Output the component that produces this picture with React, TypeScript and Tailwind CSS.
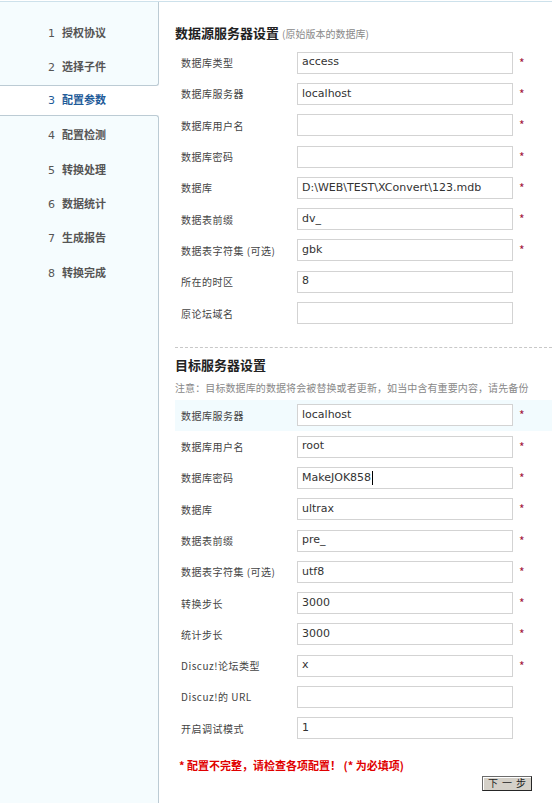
import React from 'react';

type Field = {
  label: string;
  value?: string;
  required?: boolean;
  caret?: boolean;
  hover?: boolean;
};

const steps = ['授权协议', '选择子件', '配置参数', '配置检测', '转换处理', '数据统计', '生成报告', '转换完成'];
const current = 3;

const sourceFields: Field[] = [
  { label: '数据库类型', value: 'access', required: true },
  { label: '数据库服务器', value: 'localhost', required: true },
  { label: '数据库用户名', value: '', required: true },
  { label: '数据库密码', value: '', required: true },
  { label: '数据库', value: 'D:\\WEB\\TEST\\XConvert\\123.mdb', required: true },
  { label: '数据表前缀', value: 'dv_', required: true },
  { label: '数据表字符集 (可选)', value: 'gbk', required: true },
  { label: '所在的时区', value: '8' },
  { label: '原论坛域名', value: '' },
];

const targetFields: Field[] = [
  { label: '数据库服务器', value: 'localhost', required: true, hover: true },
  { label: '数据库用户名', value: 'root', required: true },
  { label: '数据库密码', value: 'MakeJOK858', required: true, caret: true },
  { label: '数据库', value: 'ultrax', required: true },
  { label: '数据表前缀', value: 'pre_', required: true },
  { label: '数据表字符集 (可选)', value: 'utf8', required: true },
  { label: '转换步长', value: '3000', required: true },
  { label: '统计步长', value: '3000', required: true },
  { label: 'Discuz!论坛类型', value: 'x', required: true },
  { label: 'Discuz!的 URL', value: '' },
  { label: '开启调试模式', value: '1' },
];

const StepItem: React.FC<{ n: number; name: string }> = ({ n, name }) => {
  const active = n === current;
  return (
    <div className={`flex items-center pl-[48px] text-[11px] ${active ? 'h-[29px] bg-white pt-[3px]' : 'h-[34.3px] pt-[2px]'}`}>
      <span className={active ? 'text-[#1f5b99]' : 'text-[#555]'}>{n}</span>
      <span className={`ml-[7px] font-bold ${active ? 'text-[#1f5b99]' : 'text-[#555]'}`}>{name}</span>
    </div>
  );
};

const FormRow: React.FC<{ field: Field }> = ({ field }) => (
  <div className={`flex h-[31.3px] items-center pl-[6px] ${field.hover ? 'bg-[#f2fbfe]' : ''}`}>
    <label className="w-[116px] text-[10px] text-[#444] tracking-[0.5px]">{field.label}</label>
    <div className="flex h-[22px] w-[216px] items-center border border-[#d3d3d3] bg-white px-[4px] font-['DejaVu_Sans','Noto_Sans_CJK_SC',sans-serif] text-[11px] text-[#333]">
      <span>{field.value}</span>
      {field.caret && <span className="ml-px h-[14px] w-px bg-black" />}
    </div>
    {field.required && <span className="ml-[6px] text-[12px] text-[#a3173d]">*</span>}
  </div>
);

export default function App() {
  return (
    <div className="min-h-screen bg-white pt-px font-['DejaVu_Sans','Noto_Sans_CJK_SC',sans-serif]">
      <div className="flex min-h-[802px] border-t border-[#cde1eb]">
        {/* step list */}
        <aside className="flex w-[159px] flex-col">
          <div className="rounded-br-[3px] border-r border-b border-[#bccbd4] bg-[#f5fcfe] pt-[14px]">
            {steps.slice(0, 2).map((s, i) => (
              <StepItem key={s} n={i + 1} name={s} />
            ))}
          </div>
          <StepItem n={3} name={steps[2]} />
          <div className="flex-1 rounded-tr-[3px] border-t border-r border-[#bccbd4] bg-[#f5fcfe] pt-[3px]">
            {steps.slice(3).map((s, i) => (
              <StepItem key={s} n={i + 4} name={s} />
            ))}
          </div>
        </aside>

        <main className="flex-1 pl-[16px] pt-[22px] font-['Noto_Sans_CJK_SC',sans-serif]">
          <h2 className="text-[13px] leading-[18px] font-bold text-[#222]">
            数据源服务器设置
            <span className="ml-[3px] text-[10px] font-normal text-[#888]">(原始版本的数据库)</span>
          </h2>
          <div className="mt-[4px]">
            {sourceFields.map(f => (
              <FormRow key={f.label} field={f} />
            ))}
          </div>

          <div className="mt-[18px] border-t border-dashed border-[#c8c8c8]" />

          <h2 className="mt-[8px] text-[13px] leading-[18px] font-bold text-[#222]">目标服务器设置</h2>
          <p className="mt-[7px] whitespace-nowrap text-[10px] leading-[14px] text-[#888] tracking-[0.1px]">
            注意：目标数据库的数据将会被替换或者更新，如当中含有重要内容，请先备份
          </p>
          <div className="mt-[5px]">
            {targetFields.map(f => (
              <FormRow key={f.label} field={f} />
            ))}
          </div>

          <p className="mt-[14px] pl-[4px] text-[11px] leading-[15px] font-bold text-[#e00000]">
            * 配置不完整，请检查各项配置！ (* 为必填项)
          </p>
          <div className="mt-[3px] flex justify-end pr-[20px]">
            <button className="flex h-[15px] w-[50px] items-center justify-center border border-[#6b6b6b] border-r-[#262626] border-b-[#262626] bg-[#d4d0c8] text-[10px] leading-none tracking-[4px] text-[#222] shadow-[inset_1px_1px_0_#fff]">
              <span className="ml-[4px]">下一步</span>
            </button>
          </div>
        </main>
      </div>
    </div>
  );
}
